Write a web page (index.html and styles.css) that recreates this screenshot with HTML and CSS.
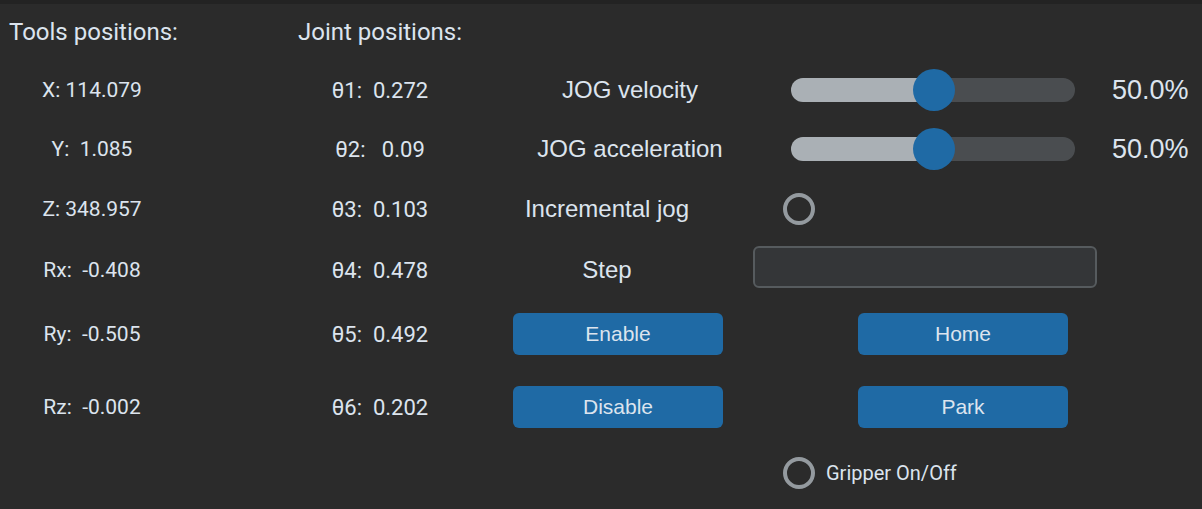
FILE: index.html
```html
<!DOCTYPE html>
<html>
<head>
<meta charset="utf-8">
<link rel="stylesheet" href="styles.css">
</head>
<body>
<div class="topbar"></div>
<div class="panel">
  <div class="title c-tools r1">Tools positions:</div>
  <div class="title c-joint r1 joint-title">Joint positions:</div>

  <div class="val c-tools r2">X: 114.079</div>
  <div class="val c-tools r3">Y:  1.085</div>
  <div class="val c-tools r4">Z: 348.957</div>
  <div class="val c-tools r5">Rx:  -0.408</div>
  <div class="val c-tools r6">Ry:  -0.505</div>
  <div class="val c-tools r7">Rz:  -0.002</div>

  <div class="val theta c-joint r2">θ1:  0.272</div>
  <div class="val theta c-joint r3">θ2:   0.09</div>
  <div class="val theta c-joint r4">θ3:  0.103</div>
  <div class="val theta c-joint r5">θ4:  0.478</div>
  <div class="val theta c-joint r6">θ5:  0.492</div>
  <div class="val theta c-joint r7">θ6:  0.202</div>

  <div class="lbl lbl-jog c-label r2">JOG velocity</div>
  <div class="slider c-widget r2"><div class="track" style="--p:50%"><div class="thumb"></div></div></div>
  <div class="pct c-pct r2">50.0%</div>

  <div class="lbl lbl-jog c-label r3">JOG acceleration</div>
  <div class="slider c-widget r3"><div class="track" style="--p:50%"><div class="thumb"></div></div></div>
  <div class="pct c-pct r3">50.0%</div>

  <div class="lbl lbl-side c-label r4">Incremental jog</div>
  <div class="radio-wrap c-widget r4"><span class="radio"></span></div>

  <div class="lbl lbl-side c-label r5">Step</div>
  <div class="entry c-widget r5"></div>

  <div class="btn btn-left c-label r6">Enable</div>
  <div class="btn btn-right c-widget r6">Home</div>
  <div class="btn btn-left c-label r7">Disable</div>
  <div class="btn btn-right c-widget r7">Park</div>

  <div class="radio-wrap c-widget r8"><span class="radio"></span><span class="radio-text">Gripper On/Off</span></div>
</div>
</body>
</html>
```

FILE: styles.css
```css
html, body {
  margin: 0;
  padding: 0;
  background: #2b2b2b;
  width: 1202px;
  height: 509px;
  overflow: hidden;
}
.topbar {
  height: 4px;
  background: #232323;
}
.panel {
  display: grid;
  grid-template-columns: 184px 100px 192px 274px 350px 102px;
  grid-template-rows: 56px 60px 58px 62px 60px 68px 78px 54px;
  color: #dce4ee;
  font-family: Roboto, "Liberation Sans", sans-serif;
}
.c-tools { grid-column: 1; }
.c-joint { grid-column: 3; }
.c-label { grid-column: 4; }
.c-widget { grid-column: 5; }
.c-pct { grid-column: 6; }
.r1 { grid-row: 1; }
.r2 { grid-row: 2; }
.r3 { grid-row: 3; }
.r4 { grid-row: 4; }
.r5 { grid-row: 5; }
.r6 { grid-row: 6; }
.r7 { grid-row: 7; }
.r8 { grid-row: 8; }

.title {
  font-size: 24px;
  align-self: center;
  justify-self: start;
  margin-left: 9px;
  white-space: pre;
}
.joint-title { margin-left: 14px; }

.val {
  font-size: 21px;
  align-self: center;
  justify-self: center;
  white-space: pre;
}
.theta { font-size: 22px; }

.lbl {
  font-family: "Liberation Sans", Arial, sans-serif;
  font-size: 24px;
  align-self: center;
  text-align: center;
  white-space: pre;
}
.lbl-jog { padding-left: 34px; }
.lbl-side { padding-right: 12px; }

.slider {
  align-self: center;
  justify-self: start;
  margin-left: 41px;
}
.track {
  position: relative;
  width: 284px;
  height: 24px;
  border-radius: 12px;
  background: linear-gradient(to right, #aab0b5 0, #aab0b5 var(--p), #4a4d50 var(--p), #4a4d50 100%);
}
.thumb {
  position: absolute;
  left: 122px;
  top: -9px;
  width: 42px;
  height: 42px;
  border-radius: 50%;
  background: #1f6aa5;
}
.pct {
  font-family: "Liberation Sans", Arial, sans-serif;
  font-size: 27px;
  align-self: center;
  justify-self: start;
  margin-left: 12px;
}

.radio-wrap {
  display: flex;
  align-items: center;
  gap: 11px;
  align-self: center;
  justify-self: start;
  margin-left: 33px;
}
.radio {
  box-sizing: border-box;
  width: 32px;
  height: 32px;
  border-radius: 50%;
  border: 4px solid #949a9f;
}
.radio-text {
  font-size: 20px;
}

.entry {
  box-sizing: border-box;
  width: 344px;
  height: 42px;
  margin-left: 3px;
  margin-bottom: 6px;
  align-self: center;
  justify-self: start;
  background: #343638;
  border: 2px solid #565b5e;
  border-radius: 6px;
}

.btn {
  box-sizing: border-box;
  width: 210px;
  height: 42px;
  border-radius: 6px;
  background: #1f6aa5;
  color: #dce4ee;
  font-family: "Liberation Sans", Arial, sans-serif;
  font-size: 21px;
  display: flex;
  align-items: center;
  justify-content: center;
  align-self: center;
  justify-self: start;
}
.btn-left { margin-left: 37px; }
.btn-right { margin-left: 108px; }
```
